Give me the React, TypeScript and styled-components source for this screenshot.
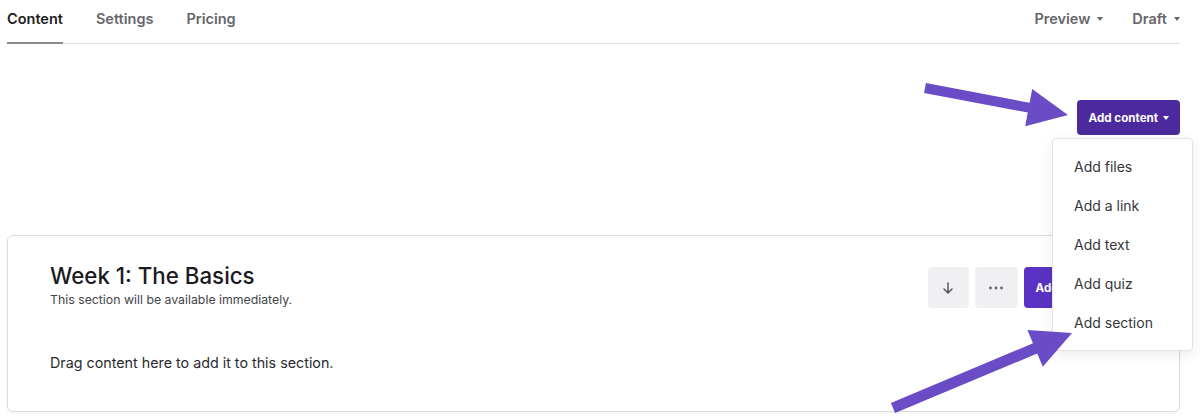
import React from "react";
import styled, { createGlobalStyle } from "styled-components";

const GlobalStyle = createGlobalStyle`
  html, body {
    margin: 0;
    padding: 0;
    background: #ffffff;
    font-family: Inter, "Noto Sans", "Liberation Sans", sans-serif;
    color: #1d1d22;
  }
  * {
    box-sizing: border-box;
  }
`;

const Page = styled.div`
  position: relative;
  width: 1200px;
  height: 420px;
  overflow: hidden;
  padding: 0 20px 0 7px;
`;

const Nav = styled.nav`
  display: flex;
  justify-content: space-between;
  align-items: stretch;
  height: 44px;
  border-bottom: 1px solid #e2e2e4;
`;

const TabGroup = styled.div<{ $gap: number }>`
  display: flex;
  gap: ${(p) => p.$gap}px;
`;

const Tab = styled.div<{ $active?: boolean }>`
  display: flex;
  align-items: center;
  gap: 7px;
  height: 44px;
  padding-bottom: 6px;
  margin-bottom: -1px;
  font-size: 14.5px;
  font-weight: 600;
  color: ${(p) => (p.$active ? "#1c1c20" : "#66666c")};
  border-bottom: 2px solid ${(p) => (p.$active ? "#8a8a8e" : "transparent")};
`;

const Caret = styled.span<{ $color?: string }>`
  display: inline-block;
  width: 0;
  height: 0;
  border-left: 3.5px solid transparent;
  border-right: 3.5px solid transparent;
  border-top: 4px solid ${(p) => p.$color || "#66666c"};
  margin-top: 1px;
`;

const ActionBar = styled.div`
  display: flex;
  justify-content: flex-end;
  margin-top: 56px;
`;

const DropdownWrap = styled.div`
  position: relative;
`;

const PrimaryButton = styled.button<{ $tone?: "dark" | "light" }>`
  display: flex;
  align-items: center;
  gap: 5px;
  height: ${(p) => (p.$tone === "light" ? 41 : 35)}px;
  padding: 0 11px 0 12px;
  border: none;
  border-radius: 4px;
  background: ${(p) => (p.$tone === "light" ? "#5a33c4" : "#4b2a9d")};
  color: #ffffff;
  font-family: inherit;
  font-size: 11.6px;
  font-weight: 700;
  white-space: nowrap;
  cursor: pointer;
`;

const Menu = styled.ul`
  position: absolute;
  top: calc(100% + 3px);
  right: -13px;
  width: 141px;
  margin: 0;
  padding: 8px 0;
  list-style: none;
  background: #ffffff;
  border: 1px solid #e3e3e6;
  border-radius: 4px;
  box-shadow: 0 4px 14px rgba(0, 0, 0, 0.08);
  z-index: 5;
`;

const MenuItem = styled.li`
  height: 39px;
  line-height: 39px;
  padding-left: 21px;
  font-size: 14px;
  color: #36363b;
`;

const Card = styled.section`
  margin-top: 100px;
  border: 1px solid #dcdcdf;
  border-radius: 6px;
  box-shadow: 0 1px 3px rgba(0, 0, 0, 0.05);
  padding: 26px 52px 38px 42px;
`;

const CardHeader = styled.div`
  display: flex;
  justify-content: space-between;
  align-items: flex-start;
`;

const TitleBlock = styled.div`
  display: flex;
  flex-direction: column;
`;

const Title = styled.h2`
  margin: 0;
  font-size: 22.3px;
  line-height: 28px;
  font-weight: 500;
  color: #1b1b1f;
`;

const Subtitle = styled.p`
  margin: 2px 0 0;
  font-size: 12.3px;
  line-height: 16px;
  color: #44444a;
`;

const ButtonRow = styled.div`
  display: flex;
  gap: 6px;
  margin-top: 5px;
`;

const IconButton = styled.button<{ $wide?: boolean }>`
  display: flex;
  align-items: center;
  justify-content: center;
  width: ${(p) => (p.$wide ? 43 : 41)}px;
  height: 41px;
  border: none;
  border-radius: 4px;
  background: #f0f0f2;
  color: #55555b;
  padding: 0;
`;

const EmptyText = styled.p`
  margin: 45px 0 0;
  font-size: 14.3px;
  line-height: 20px;
  color: #2a2a2f;
`;

const Annotations = styled.svg`
  position: absolute;
  left: 0;
  top: 0;
  pointer-events: none;
  z-index: 10;
`;

const menuItems = ["Add files", "Add a link", "Add text", "Add quiz", "Add section"];

const App: React.FC = () => {
  return (
    <>
      <GlobalStyle />
      <Page>
        <Nav>
          <TabGroup $gap={33}>
            <Tab $active>Content</Tab>
            <Tab>Settings</Tab>
            <Tab>Pricing</Tab>
          </TabGroup>
          <TabGroup $gap={29}>
            <Tab>
              Preview <Caret />
            </Tab>
            <Tab>
              Draft <Caret />
            </Tab>
          </TabGroup>
        </Nav>

        <ActionBar>
          <DropdownWrap>
            <PrimaryButton>
              Add content <Caret $color="#ffffff" />
            </PrimaryButton>
            <Menu>
              {menuItems.map((item) => (
                <MenuItem key={item}>{item}</MenuItem>
              ))}
            </Menu>
          </DropdownWrap>
        </ActionBar>

        <Card>
          <CardHeader>
            <TitleBlock>
              <Title>Week 1: The Basics</Title>
              <Subtitle>This section will be available immediately.</Subtitle>
            </TitleBlock>
            <ButtonRow>
              <IconButton aria-label="Move down">
                <svg width="14" height="14" viewBox="0 0 14 14" fill="none">
                  <path
                    d="M7 2v10M3 8l4 4 4-4"
                    stroke="#55555b"
                    strokeWidth="1.5"
                    strokeLinecap="round"
                    strokeLinejoin="round"
                  />
                </svg>
              </IconButton>
              <IconButton $wide aria-label="More">
                <svg width="16" height="4" viewBox="0 0 16 4">
                  <circle cx="2.5" cy="2" r="1.4" fill="#66666c" />
                  <circle cx="8" cy="2" r="1.4" fill="#66666c" />
                  <circle cx="13.5" cy="2" r="1.4" fill="#66666c" />
                </svg>
              </IconButton>
              <PrimaryButton $tone="light">
                Add content <Caret $color="#ffffff" />
              </PrimaryButton>
            </ButtonRow>
          </CardHeader>
          <EmptyText>Drag content here to add it to this section.</EmptyText>
        </Card>

        <Annotations width="1200" height="420" viewBox="0 0 1200 420">
          <polygon
            points="925.9,83.1 1029.6,102.7 1032.2,88.9 1068,115 1025.2,126.3 1027.8,112.5 924.1,92.9"
            fill="#6a4cc6"
          />
          <polygon
            points="890.9,402.9 1033,343.3 1027.4,330 1072,333 1042.8,366.8 1037.2,353.5 895.1,413.1"
            fill="#6a4cc6"
          />
        </Annotations>
      </Page>
    </>
  );
};

export default App;
